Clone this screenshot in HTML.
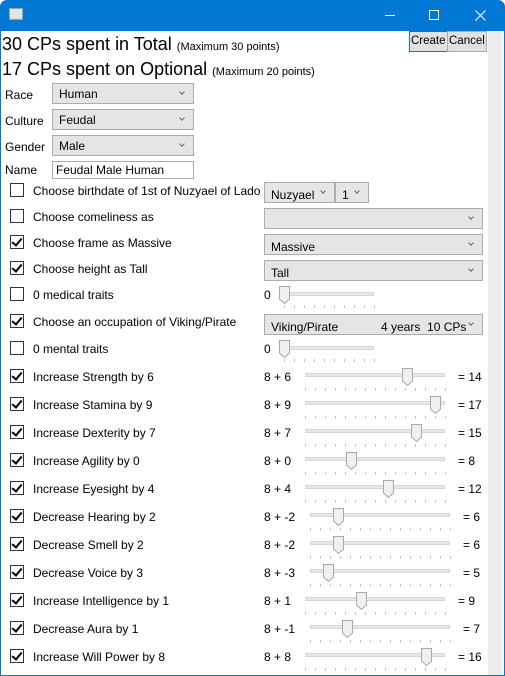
<!DOCTYPE html>
<html><head><meta charset="utf-8"><style>
*{box-sizing:border-box;margin:0;padding:0}
body{width:505px;height:676px;position:relative;background:#fff;font-family:"Liberation Sans",sans-serif;font-size:12px;color:#000;overflow:hidden}
.a{position:absolute;white-space:nowrap}
.tb{left:0;top:0;width:505px;height:31px;background:#0078d4;border-radius:7px 7px 0 0}
.frame{left:0;top:31px;width:505px;height:645px;border:1px solid #0078d4;border-top:none}
.cb{width:14px;height:14px;border:1px solid #333;background:#fff}
.cb.c::after{content:"";position:absolute;left:3px;top:0px;width:4px;height:8px;border:solid #000;border-width:0 2px 2px 0;transform:rotate(40deg)}
.combo{height:21px;border:1px solid #acacac;background:#e5e5e5;padding:3px 0 0 6px;font-size:12px}
.combo::after{content:"";position:absolute;right:9px;top:6px;width:3px;height:3px;border:solid #666;border-width:0 1px 1px 0;transform:rotate(45deg)}
.trk{height:4px;background:#e7e7e7;border:1px solid #d6d6d6}
.th{width:11px;height:18px}
.tk{height:3px;background-image:repeating-linear-gradient(90deg,#c4c4c4 0 1px,transparent 1px 10px)}
.btn{height:21px;border:1px solid #adadad;background:#e1e1e1;padding:3px 1px 0;font-size:11.5px}
</style></head><body>
<div class="a tb"></div>
<div class="a" style="left:9px;top:8px;width:14px;height:12px;background:#dfe6e2;border:1px solid #8aa"></div>
<div class="a" style="left:385px;top:15px;width:10px;height:1px;background:#fff"></div>
<div class="a" style="left:429px;top:10px;width:10px;height:10px;border:1px solid #fff"></div>
<svg class="a" style="left:475px;top:10px" width="11" height="11" viewBox="0 0 11 11"><path d="M.5 .5L10.5 10.5M10.5 .5L.5 10.5" stroke="#fff" stroke-width="1.1"/></svg>
<div class="a frame"></div>
<div class="a" style="left:488px;top:31px;width:14px;height:644px;background:#ececec"></div>
<div class="a" style="left:2px;top:34px;font-size:18px">30 CPs spent in Total <span style="font-size:11px">(Maximum 30 points)</span></div>
<div class="a" style="left:2px;top:59px;font-size:18px">17 CPs spent on Optional <span style="font-size:11px">(Maximum 20 points)</span></div>
<div class="a btn" style="left:409px;top:31px;width:39px;border-color:#0078d4">Create</div>
<div class="a btn" style="left:447px;top:31px;width:40px">Cancel</div>

<div class="a" style="left:5px;top:88px">Race</div><div class="a combo" style="left:52px;top:83px;width:142px">Human</div>
<div class="a" style="left:5px;top:114px">Culture</div><div class="a combo" style="left:52px;top:109px;width:142px">Feudal</div>
<div class="a" style="left:5px;top:140px">Gender</div><div class="a combo" style="left:52px;top:135px;width:142px">Male</div>
<div class="a" style="left:5px;top:163px">Name</div><div class="a" style="left:52px;top:161px;width:142px;height:18px;border:1px solid #acacac;padding:1px 0 0 3px">Feudal Male Human</div>

<div class="a cb" style="left:10px;top:183px"></div><div class="a" style="left:33px;top:184px">Choose birthdate of 1st of Nuzyael of Lado</div>
<div class="a combo" style="left:264px;top:182px;width:71px;padding-top:5px">Nuzyael</div><div class="a combo" style="left:335px;top:182px;width:34px;padding-top:5px">1</div>
<div class="a cb" style="left:10px;top:209px"></div><div class="a" style="left:33px;top:210px">Choose comeliness as</div>
<div class="a combo" style="left:264px;top:208px;width:219px"></div>
<div class="a cb c" style="left:10px;top:235px"></div><div class="a" style="left:33px;top:236px">Choose frame as Massive</div>
<div class="a combo" style="left:264px;top:234px;width:219px;padding-top:5px">Massive</div>
<div class="a cb c" style="left:10px;top:261px"></div><div class="a" style="left:33px;top:262px">Choose height as Tall</div>
<div class="a combo" style="left:264px;top:260px;width:219px;padding-top:5px">Tall</div>
<div class="a cb" style="left:10px;top:287px"></div><div class="a" style="left:33px;top:288px">0 medical traits</div>
<div class="a" style="left:264px;top:288px">0</div>
<div class="a trk" style="left:284px;top:292px;width:90px"></div><div class="a tk" style="left:284px;top:305px;width:92px"></div>
<svg class="a th" style="left:279px;top:286px" viewBox="0 0 11 18"><path d="M.5 .5H10.5V13L5.5 17.5L.5 13Z" fill="#f0f0f0" stroke="#a8a8a8"/></svg>
<div class="a cb c" style="left:10px;top:314px"></div><div class="a" style="left:33px;top:315px">Choose an occupation of Viking/Pirate</div>
<div class="a combo" style="left:264px;top:314px;width:219px;padding-top:5px">Viking/Pirate<span style="position:absolute;left:116px">4 years&nbsp;&nbsp;10 CPs</span></div>
<div class="a cb" style="left:10px;top:341px"></div><div class="a" style="left:33px;top:342px">0 mental traits</div>
<div class="a" style="left:264px;top:342px">0</div>
<div class="a trk" style="left:284px;top:346px;width:90px"></div><div class="a tk" style="left:284px;top:359px;width:92px"></div>
<svg class="a th" style="left:279px;top:340px" viewBox="0 0 11 18"><path d="M.5 .5H10.5V13L5.5 17.5L.5 13Z" fill="#f0f0f0" stroke="#a8a8a8"/></svg>

<div class="a cb c" style="left:10px;top:369px"></div><div class="a" style="left:33px;top:370px">Increase Strength by 6</div><div class="a" style="left:264px;top:370px">8 + 6</div>
<div class="a trk" style="left:305px;top:373px;width:140px"></div><div class="a tk" style="left:305px;top:388px;width:142px"></div>
<svg class="a th" style="left:402px;top:368px" viewBox="0 0 11 18"><path d="M.5 .5H10.5V13L5.5 17.5L.5 13Z" fill="#f0f0f0" stroke="#a8a8a8"/></svg><div class="a" style="left:458px;top:370px">= 14</div>

<div class="a cb c" style="left:10px;top:397px"></div><div class="a" style="left:33px;top:398px">Increase Stamina by 9</div><div class="a" style="left:264px;top:398px">8 + 9</div>
<div class="a trk" style="left:305px;top:401px;width:140px"></div><div class="a tk" style="left:305px;top:416px;width:142px"></div>
<svg class="a th" style="left:430px;top:396px" viewBox="0 0 11 18"><path d="M.5 .5H10.5V13L5.5 17.5L.5 13Z" fill="#f0f0f0" stroke="#a8a8a8"/></svg><div class="a" style="left:458px;top:398px">= 17</div>

<div class="a cb c" style="left:10px;top:425px"></div><div class="a" style="left:33px;top:426px">Increase Dexterity by 7</div><div class="a" style="left:264px;top:426px">8 + 7</div>
<div class="a trk" style="left:305px;top:429px;width:140px"></div><div class="a tk" style="left:305px;top:444px;width:142px"></div>
<svg class="a th" style="left:411px;top:424px" viewBox="0 0 11 18"><path d="M.5 .5H10.5V13L5.5 17.5L.5 13Z" fill="#f0f0f0" stroke="#a8a8a8"/></svg><div class="a" style="left:458px;top:426px">= 15</div>

<div class="a cb c" style="left:10px;top:453px"></div><div class="a" style="left:33px;top:454px">Increase Agility by 0</div><div class="a" style="left:264px;top:454px">8 + 0</div>
<div class="a trk" style="left:305px;top:457px;width:140px"></div><div class="a tk" style="left:305px;top:472px;width:142px"></div>
<svg class="a th" style="left:346px;top:452px" viewBox="0 0 11 18"><path d="M.5 .5H10.5V13L5.5 17.5L.5 13Z" fill="#f0f0f0" stroke="#a8a8a8"/></svg><div class="a" style="left:458px;top:454px">= 8</div>

<div class="a cb c" style="left:10px;top:481px"></div><div class="a" style="left:33px;top:482px">Increase Eyesight by 4</div><div class="a" style="left:264px;top:482px">8 + 4</div>
<div class="a trk" style="left:305px;top:485px;width:140px"></div><div class="a tk" style="left:305px;top:500px;width:142px"></div>
<svg class="a th" style="left:383px;top:480px" viewBox="0 0 11 18"><path d="M.5 .5H10.5V13L5.5 17.5L.5 13Z" fill="#f0f0f0" stroke="#a8a8a8"/></svg><div class="a" style="left:458px;top:482px">= 12</div>

<div class="a cb c" style="left:10px;top:509px"></div><div class="a" style="left:33px;top:510px">Decrease Hearing by 2</div><div class="a" style="left:264px;top:510px">8 + -2</div>
<div class="a trk" style="left:310px;top:513px;width:140px"></div><div class="a tk" style="left:310px;top:528px;width:142px"></div>
<svg class="a th" style="left:333px;top:508px" viewBox="0 0 11 18"><path d="M.5 .5H10.5V13L5.5 17.5L.5 13Z" fill="#f0f0f0" stroke="#a8a8a8"/></svg><div class="a" style="left:463px;top:510px">= 6</div>

<div class="a cb c" style="left:10px;top:537px"></div><div class="a" style="left:33px;top:538px">Decrease Smell by 2</div><div class="a" style="left:264px;top:538px">8 + -2</div>
<div class="a trk" style="left:310px;top:541px;width:140px"></div><div class="a tk" style="left:310px;top:556px;width:142px"></div>
<svg class="a th" style="left:333px;top:536px" viewBox="0 0 11 18"><path d="M.5 .5H10.5V13L5.5 17.5L.5 13Z" fill="#f0f0f0" stroke="#a8a8a8"/></svg><div class="a" style="left:463px;top:538px">= 6</div>

<div class="a cb c" style="left:10px;top:565px"></div><div class="a" style="left:33px;top:566px">Decrease Voice by 3</div><div class="a" style="left:264px;top:566px">8 + -3</div>
<div class="a trk" style="left:310px;top:569px;width:140px"></div><div class="a tk" style="left:310px;top:584px;width:142px"></div>
<svg class="a th" style="left:323px;top:564px" viewBox="0 0 11 18"><path d="M.5 .5H10.5V13L5.5 17.5L.5 13Z" fill="#f0f0f0" stroke="#a8a8a8"/></svg><div class="a" style="left:463px;top:566px">= 5</div>

<div class="a cb c" style="left:10px;top:593px"></div><div class="a" style="left:33px;top:594px">Increase Intelligence by 1</div><div class="a" style="left:264px;top:594px">8 + 1</div>
<div class="a trk" style="left:305px;top:597px;width:140px"></div><div class="a tk" style="left:305px;top:612px;width:142px"></div>
<svg class="a th" style="left:356px;top:592px" viewBox="0 0 11 18"><path d="M.5 .5H10.5V13L5.5 17.5L.5 13Z" fill="#f0f0f0" stroke="#a8a8a8"/></svg><div class="a" style="left:458px;top:594px">= 9</div>

<div class="a cb c" style="left:10px;top:621px"></div><div class="a" style="left:33px;top:622px">Decrease Aura by 1</div><div class="a" style="left:264px;top:622px">8 + -1</div>
<div class="a trk" style="left:310px;top:625px;width:140px"></div><div class="a tk" style="left:310px;top:640px;width:142px"></div>
<svg class="a th" style="left:342px;top:620px" viewBox="0 0 11 18"><path d="M.5 .5H10.5V13L5.5 17.5L.5 13Z" fill="#f0f0f0" stroke="#a8a8a8"/></svg><div class="a" style="left:463px;top:622px">= 7</div>

<div class="a cb c" style="left:10px;top:649px"></div><div class="a" style="left:33px;top:650px">Increase Will Power by 8</div><div class="a" style="left:264px;top:650px">8 + 8</div>
<div class="a trk" style="left:305px;top:653px;width:140px"></div><div class="a tk" style="left:305px;top:668px;width:142px"></div>
<svg class="a th" style="left:421px;top:648px" viewBox="0 0 11 18"><path d="M.5 .5H10.5V13L5.5 17.5L.5 13Z" fill="#f0f0f0" stroke="#a8a8a8"/></svg><div class="a" style="left:458px;top:650px">= 16</div>
</body></html>
